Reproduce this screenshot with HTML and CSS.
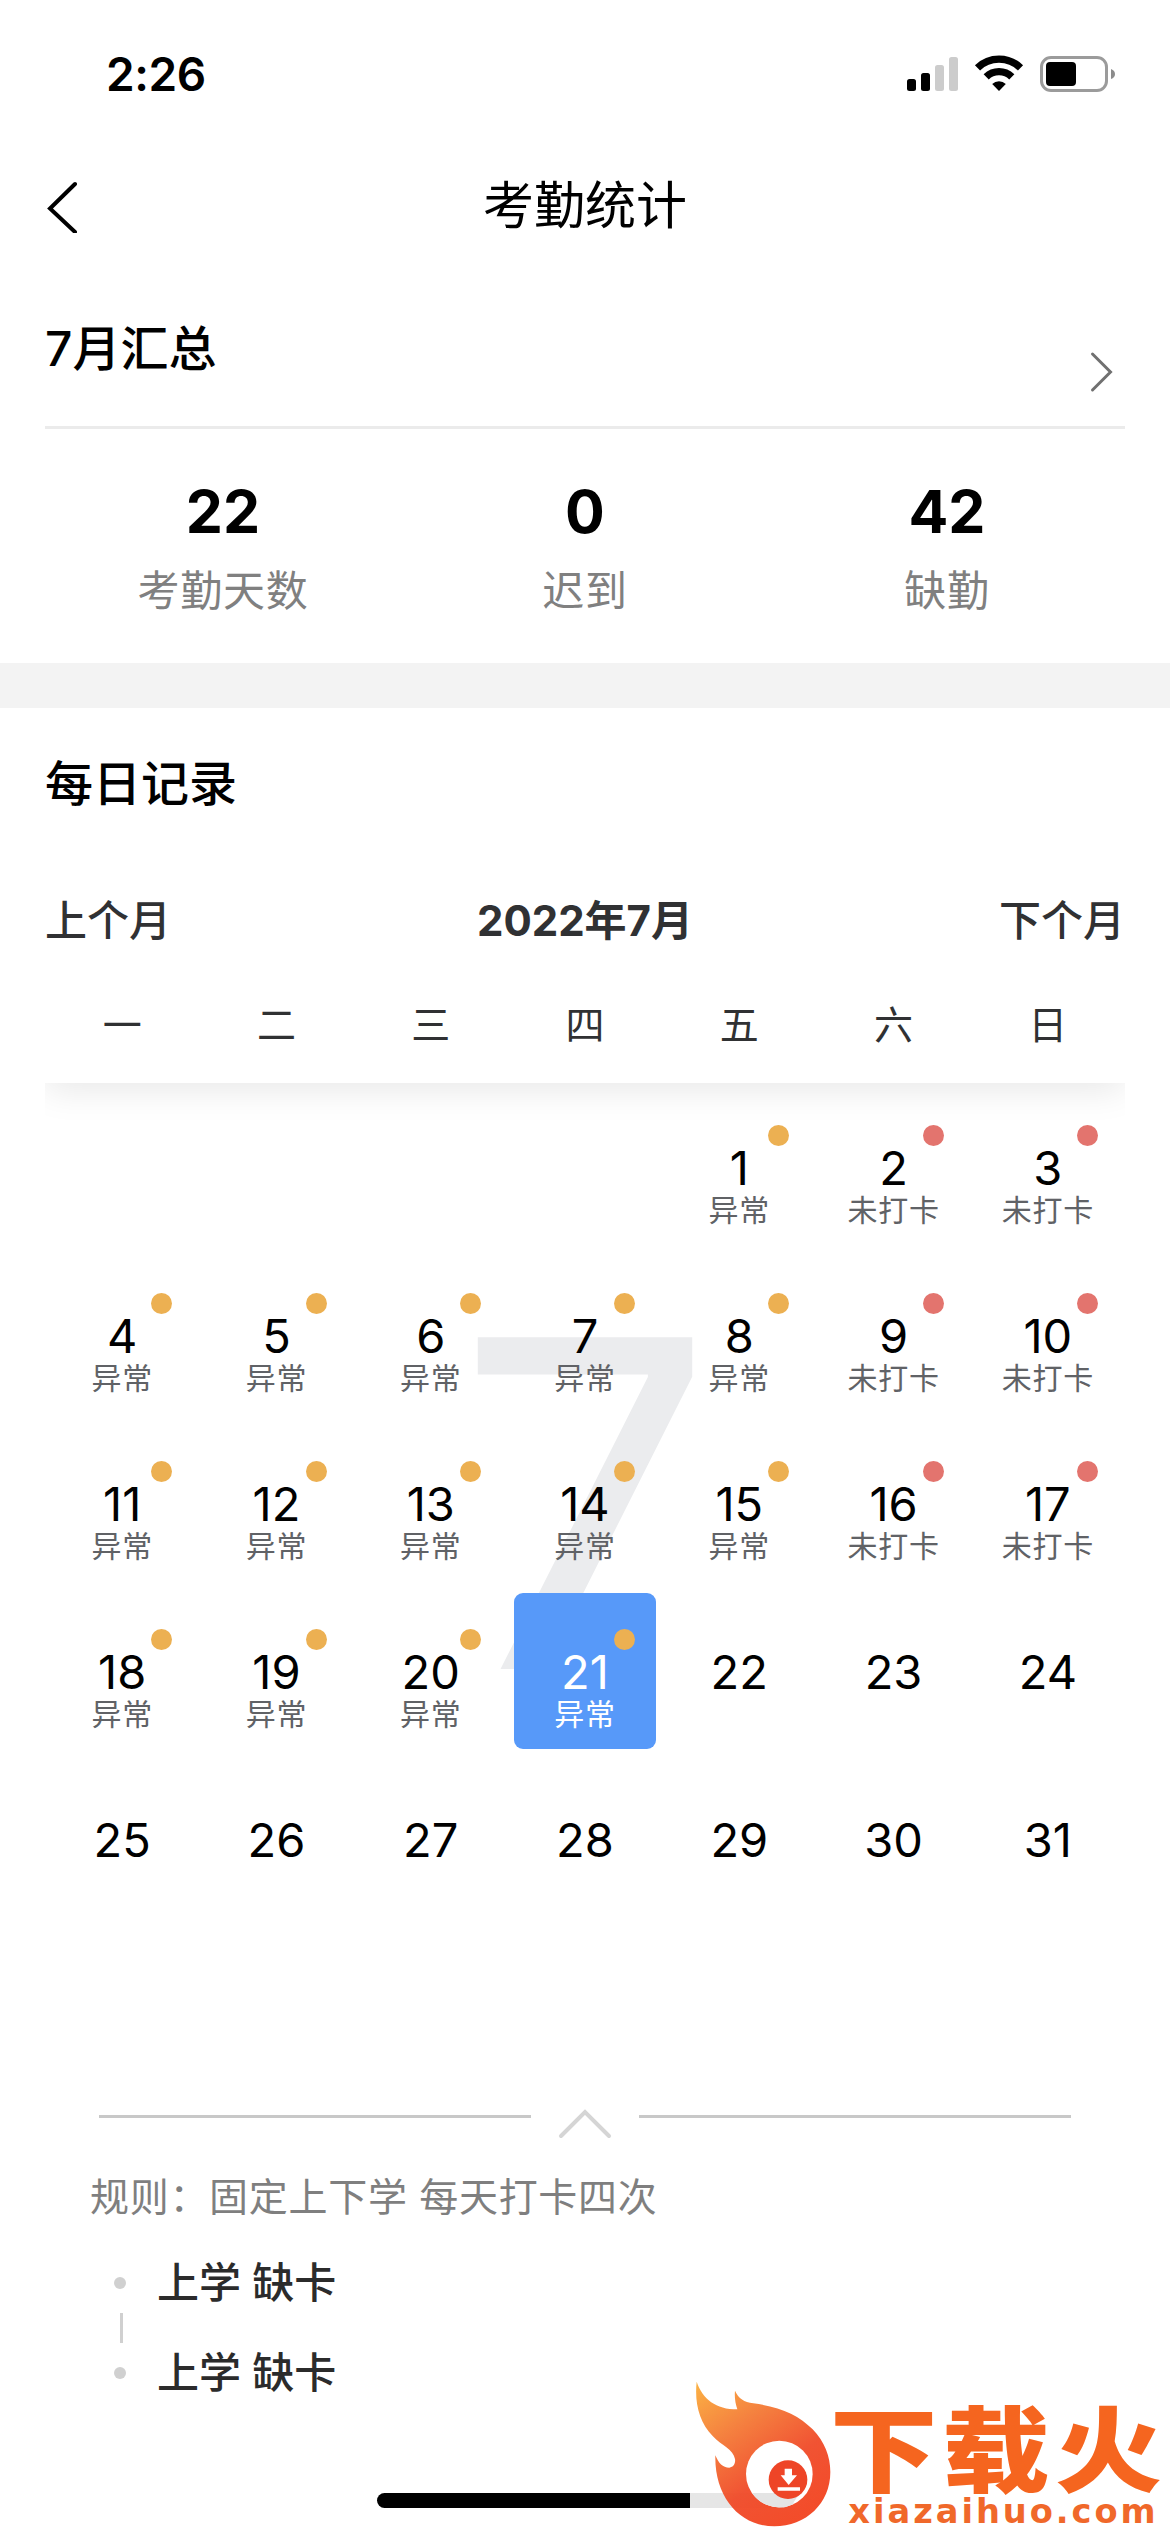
FILE: index.html
```html
<!DOCTYPE html>
<html lang="zh-CN">
<head>
<meta charset="utf-8"/>
<title>考勤统计</title>
<link rel="stylesheet" href="styles.css">
</head>
<body>
<div class="page">

  <!-- 状态栏 -->
  <div class="status">
    <span class="time">2:26</span>
    <svg class="status-icons" width="210" height="40" viewBox="0 0 210 40">
      <rect x="1" y="25" width="9" height="12" rx="2.5"/>
      <rect x="15" y="19" width="9" height="18" rx="2.5"/>
      <rect x="29" y="11" width="9" height="26" rx="2.5" fill="#ccc"/>
      <rect x="43" y="3" width="9" height="34" rx="2.5" fill="#ccc"/>
      <g fill="none" stroke="#000" stroke-width="7.4">
        <path d="M71.5 13.8 A31 31 0 0 1 114.5 13.8"/>
        <path d="M80.2 22.8 A18.5 18.5 0 0 1 105.8 22.8"/>
      </g>
      <path d="M93 37 L86.2 30 A9.6 9.6 0 0 1 99.8 30 Z"/>
      <rect x="135.5" y="3.5" width="65" height="33" rx="9.5" fill="none" stroke="#9b9b9b" stroke-width="3"/>
      <rect x="140" y="8" width="30" height="24" rx="4"/>
      <path d="M205 15 Q209 16.5 209 20 T205 25 Z" fill="#8c8c8c"/>
    </svg>
  </div>

  <div class="navbar">
    <svg class="back" width="32" height="54" viewBox="0 0 32 54">
      <path d="M30 5 L5 29.5 L30 53" fill="none" stroke="#000" stroke-width="4" stroke-linecap="round"/>
    </svg>
    <h1>考勤统计</h1>
  </div>

  <!-- 月汇总 -->
  <div class="summary">
    <h2>7月汇总</h2>
    <svg class="more" width="24" height="42" viewBox="0 0 24 42">
      <path d="M3.5 3 L21.5 21 L3.5 39" fill="none" stroke="#707070" stroke-width="3" stroke-linecap="round"/>
    </svg>
  </div>
  <div class="stats">
    <div><b>22</b><span>考勤天数</span></div>
    <div><b>0</b><span>迟到</span></div>
    <div><b>42</b><span>缺勤</span></div>
  </div>

  <div class="band"></div>

  <!-- 每日记录 -->
  <div class="daily">
    <h2>每日记录</h2>
    <div class="month-nav">
      <span>上个月</span>
      <strong>2022年7月</strong>
      <span>下个月</span>
    </div>
    <div class="week">
      <span>一</span><span>二</span><span>三</span><span>四</span><span>五</span><span>六</span><span>日</span>
    </div>
    <div class="days">
      <div class="bg-month">7</div>
      <div class="day late first"><b>1</b><i>异常</i></div>
      <div class="day miss"><b>2</b><i>未打卡</i></div>
      <div class="day miss"><b>3</b><i>未打卡</i></div>
      <div class="day late"><b>4</b><i>异常</i></div>
      <div class="day late"><b>5</b><i>异常</i></div>
      <div class="day late"><b>6</b><i>异常</i></div>
      <div class="day late"><b>7</b><i>异常</i></div>
      <div class="day late"><b>8</b><i>异常</i></div>
      <div class="day miss"><b>9</b><i>未打卡</i></div>
      <div class="day miss"><b>10</b><i>未打卡</i></div>
      <div class="day late"><b>11</b><i>异常</i></div>
      <div class="day late"><b>12</b><i>异常</i></div>
      <div class="day late"><b>13</b><i>异常</i></div>
      <div class="day late"><b>14</b><i>异常</i></div>
      <div class="day late"><b>15</b><i>异常</i></div>
      <div class="day miss"><b>16</b><i>未打卡</i></div>
      <div class="day miss"><b>17</b><i>未打卡</i></div>
      <div class="day late"><b>18</b><i>异常</i></div>
      <div class="day late"><b>19</b><i>异常</i></div>
      <div class="day late"><b>20</b><i>异常</i></div>
      <div class="day late active"><b>21</b><i>异常</i></div>
      <div class="day"><b>22</b></div>
      <div class="day"><b>23</b></div>
      <div class="day"><b>24</b></div>
      <div class="day"><b>25</b></div>
      <div class="day"><b>26</b></div>
      <div class="day"><b>27</b></div>
      <div class="day"><b>28</b></div>
      <div class="day"><b>29</b></div>
      <div class="day"><b>30</b></div>
      <div class="day"><b>31</b></div>
    </div>
  </div>

  <!-- 收起 -->
  <div class="fold">
    <span class="line"></span>
    <svg width="56" height="30" viewBox="0 0 56 30">
      <path d="M4 27 L28 3 L52 27" fill="none" stroke="#d5d5d5" stroke-width="4" stroke-linecap="round"/>
    </svg>
    <span class="line"></span>
  </div>

  <p class="rule">规则：固定上下学 每天打卡四次</p>
  <ul class="records">
    <li>上学 缺卡</li>
    <li>上学 缺卡</li>
  </ul>

  <div class="home-bar"></div>

  <!-- 角标 -->
  <svg class="mark" width="480" height="152" viewBox="60 54 1440 456">
    <defs>
      <linearGradient id="fire" x1="0" y1="0" x2="0.65" y2="1">
        <stop offset="0" stop-color="#fbae3a"/>
        <stop offset=".35" stop-color="#f47a35"/>
        <stop offset=".7" stop-color="#f04a28"/>
        <stop offset="1" stop-color="#f2431f"/>
      </linearGradient>
    </defs>
    <path fill="url(#fire)" fill-opacity=".95" d="M80 65 C98 118 138 148 202 148 C196 130 193 112 195 92 C206 116 222 126 250 130 C330 140 386 165 428 208 C464 246 481 290 481 336 C481 430 408 499 313 499 C210 499 133 412 136 286 C146 310 158 323 178 323 C191 322 197 310 195 297 C190 268 156 258 128 228 C88 186 73 130 80 65 Z"/>
    <circle cx="328" cy="342" r="100" fill="#fff"/>
    <path d="M246 399 H390 L371 427 V432 L350 440 Q338 444 320 442 Q272 437 246 399 Z" fill="#e4e4e4"/>
    <circle cx="354" cy="359" r="58" fill="#ee4527"/>
    <path d="M344 326 H366 V346 H381 L356 375 L332 346 H344 Z M323 382 H390 V392 H323 Z" fill="#fff"/>
    <text class="mark-name" transform="translate(480 376) scale(1 .87)" textLength="996">下载火</text>
    <text class="mark-url" x="535" y="490" textLength="922">xiazaihuo.com</text>
  </svg>
</div>
</body>
</html>
```
FILE: styles.css
```css
*{margin:0;padding:0;box-sizing:border-box;}
body{background:#fff;color:#000;font-family:Inter,"Noto Sans CJK SC",sans-serif;}
.page{position:relative;width:1170px;height:2532px;overflow:hidden;background:#fff;}
h1,h2{font-weight:500;}

.status{height:148px;display:flex;align-items:center;justify-content:space-between;padding:0 54px 0 106px;}
.time{font-size:46px;font-weight:600;line-height:56px;letter-spacing:-.4px;}

.navbar{height:116px;display:grid;grid-template-columns:200px 1fr 200px;align-items:center;padding:0 45px;}
.navbar h1{font-size:51px;font-weight:400;line-height:60px;text-align:center;}

.summary{margin:0 45px;height:165px;padding-top:8px;display:flex;align-items:center;justify-content:space-between;border-bottom:3px solid #ebebeb;}
h2{font-size:48px;line-height:60px;}
.more{margin:46px 12px 0 0;}

.stats{height:234px;padding:50px 42px 0;display:grid;grid-template-columns:repeat(3,1fr);text-align:center;}
.stats b{display:block;font-size:59px;font-weight:700;line-height:66px;}
.stats span{display:block;margin-top:21px;font-size:42px;line-height:50px;letter-spacing:.7px;color:#808080;}

.band{height:45px;background:#f3f3f3;}

.daily{padding:46px 45px 0;}
.month-nav{margin-top:77px;display:flex;justify-content:space-between;font-size:42px;line-height:60px;font-weight:500;color:#303133;}
.month-nav strong{font-weight:700;}
.week{height:132px;padding-top:9px;display:grid;grid-template-columns:repeat(7,1fr);align-items:center;text-align:center;font-size:39px;color:#303133;}

.days{position:relative;overflow:hidden;display:grid;grid-template-columns:repeat(7,1fr);grid-auto-rows:168px;}
.days::before{content:"";position:absolute;left:0;right:0;top:-40px;height:40px;box-shadow:0 6px 36px rgba(0,0,0,.1);}
.bg-month{position:absolute;left:0;right:0;top:0;line-height:840px;text-align:center;font-size:456px;color:#ebecee;}
.day{position:relative;margin:6px;padding-top:51px;border-radius:9px;text-align:center;}
.first{grid-column:5;}
.day b{display:block;font-size:47px;font-weight:400;line-height:56px;}
.day i{display:block;font-style:normal;font-size:30px;line-height:30px;margin-top:-1px;letter-spacing:.7px;color:#606266;}
.late::after,.miss::after{content:"";position:absolute;top:36px;right:21px;width:21px;height:21px;border-radius:50%;background:#ecb052;}
.miss::after{background:#e3746e;}
.active{background:#5799f9;color:#fff;}
.active i{color:#fff;}

.fold{margin-top:186px;padding:0 99px;height:28px;display:flex;justify-content:space-between;align-items:flex-start;}
.line{width:432px;height:3px;margin-top:6px;background:#c8c8c8;}

.rule{margin:30px 0 0 90px;font-size:39px;line-height:60px;letter-spacing:.7px;color:#7f7f7f;}
.records{list-style:none;margin:11px 0 0 114px;font-size:42px;font-weight:500;color:#2b2b2b;}
.records li{position:relative;display:flex;align-items:center;gap:31px;line-height:90px;}
.records li::before{content:"";width:12px;height:12px;border-radius:50%;background:#d0d0d0;}
.records li + li::after{content:"";position:absolute;left:6px;top:-15px;width:3px;height:30px;background:#d0d0d0;}

.home-bar{position:absolute;left:377px;bottom:24px;width:416px;height:15px;border-radius:8px;background:#000;}
.mark{position:absolute;right:0;bottom:2px;background:rgba(255,255,255,.9);}
.mark-name{font-family:"Noto Sans CJK SC",sans-serif;font-size:322px;font-weight:900;fill:#f5651f;}
.mark-url{font-family:"DejaVu Sans",sans-serif;font-size:101px;font-weight:700;fill:#f0682a;}
```
